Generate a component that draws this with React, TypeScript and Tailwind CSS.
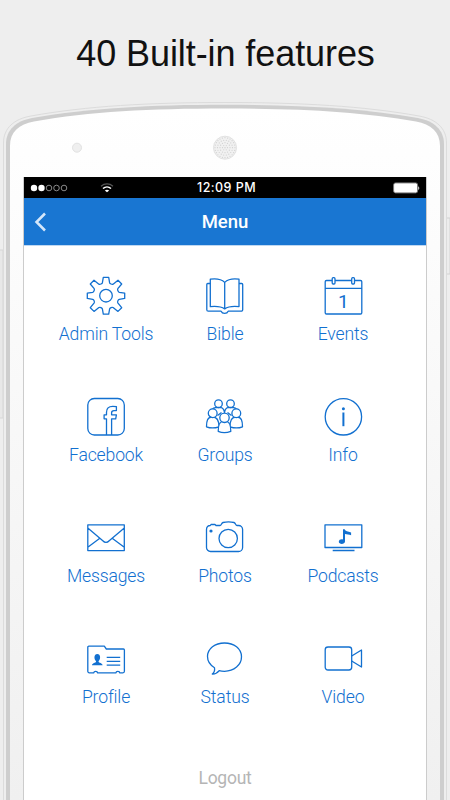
import type { ReactNode } from "react";

const Gear = () => (
  <>
    <path d="M17.300 1.300h5.400l.9 5.400c.3 1 2.400 2 3.500 1.500L32 4.300 35.700 8l-3.900 4.700c-.6 1.200.4 3.300 1.500 3.600l5.400.8v5.300l-5.400.9c-1.100.3-2.100 2.300-1.500 3.500l3.900 4.900-3.700 3.700-4.900-3.900c-1.200-.6-3.200.4-3.500 1.500l-.9 5.200h-5.400l-.9-5.200c-.3-1.100-2.300-2.100-3.500-1.500L8 35.400l-3.700-3.700 3.900-4.900c.6-1.200-.4-3.200-1.500-3.500l-5.400-.9v-5.300l5.400-.8c1.100-.3 2.100-2.400 1.500-3.600L4.300 8 8 4.300l4.900 3.900c1.200.5 3.200-.5 3.500-1.500z" />
    <circle cx="20" cy="19.700" r="6.300" />
  </>
);

const Book = () => (
  <>
    <path d="M5.300 3.200c5-.7 11-.1 14.400 3.200 3.400-3.300 9.400-3.900 14.300-3.200v27.400c-5-.5-11-.1-14.300 2.300-3.400-2.400-9.400-2.800-14.400-2.300zM19.700 6.400v26.500" />
    <path d="M5.300 7.500H2.800a1 1 0 0 0-1 1v25.200a1.500 1.500 0 0 0 1.500 1.500h12.800c1.200 2.900 5.900 2.900 7.100 0h13a1.500 1.500 0 0 0 1.500-1.500V8.500a1 1 0 0 0-1-1H34" />
  </>
);

const Calendar = () => (
  <>
    <path d="M9.200 4.500H3.500a1.300 1.300 0 0 0-1.300 1.300v30.900A1.300 1.300 0 0 0 3.500 38h34a1.300 1.300 0 0 0 1.300-1.300V5.800a1.300 1.300 0 0 0-1.300-1.300h-6M12 4.500h16.700M2.200 12.300h36.600" />
    <rect x="9.200" y="1.700" width="2.800" height="6.300" rx="1" />
    <rect x="28.700" y="1.700" width="2.800" height="6.300" rx="1" />
    <text x="20.300" y="31.500" textAnchor="middle" fontSize="19" fill="currentColor" stroke="none">
      1
    </text>
  </>
);

const Facebook = () => (
  <>
    <rect x="1.800" y="1.500" width="36.500" height="36.500" rx="6.500" />
    <path d="M20.500 38V21.800h-2.400v-4h2.400v-2.600c0-4 2.300-5.900 6.200-5.900 1.500 0 2.700.1 3.700.3v4H28c-1.900 0-2.400.8-2.400 2.200v2h4.800l-.7 4h-4.100V38" />
  </>
);

const Groups = () => (
  <>
    <circle cx="13.500" cy="6.700" r="3.800" />
    <circle cx="25.500" cy="6.700" r="3.800" />
    <path d="M7 12.500c1-1.400 2.600-2 4.300-2.200 1.500.5 3 .5 4.400 0 2 .5 3.500 2.500 3.800 5.200.3-2.700 1.800-4.700 3.800-5.200 1.400.5 2.900.5 4.400 0 1.700.2 3.300.8 4.300 2.200M12.500 18.500l4-3M26.500 18.500l-4-3" />
    <g fill="white">
      <path d="M1.500 29.800c0-5.800.8-9.800 6-9.800s6.500 4 6.500 9.800c-4 1.400-9 1.400-12.500 0zM25 29.800c0-5.800 1.300-9.800 6.500-9.800s6 4 6 9.800c-3.500 1.400-8.500 1.400-12.500 0z" />
      <circle cx="7.700" cy="16.200" r="4.400" />
      <circle cx="31.300" cy="16.200" r="4.400" />
      <path d="M13.200 34.300c0-6.200 1-10.300 6.300-10.300s6.300 4.100 6.300 10.300c-4 1.500-9 1.500-12.600 0z" />
      <circle cx="19.500" cy="20.800" r="4.700" />
    </g>
  </>
);

const Info = () => (
  <>
    <circle cx="20.400" cy="19.800" r="18.200" />
    <path d="M20.400 15.500v13.700" strokeWidth="2" />
    <circle cx="20.400" cy="11.700" r="1.500" fill="currentColor" stroke="none" />
  </>
);

const Envelope = () => (
  <path d="M1.800 6.900h36.500v25.700H1.800zM1.800 10l15 12.700c2 2.200 4.400 2.200 6.400 0L38.300 10M13.500 20.500 1.800 29.300M26.500 20.500l11.800 8.800" />
);

const Camera = () => (
  <>
    <path d="M5.300 7.500 6 6.500h4l1 1h4c1.500 0 1.200-2.500 3-3 3.500-.7 7.500-.7 11 0 1.800.5 1.500 3 3 3h1.600a4 4 0 0 1 4 4v18a4 4 0 0 1-4 4H5.500a4 4 0 0 1-4-4v-18c0-2.500 1.600-4 3.800-4z" />
    <circle cx="23.200" cy="20.500" r="9.200" />
    <circle cx="6" cy="13" r="1.600" fill="currentColor" stroke="none" />
  </>
);

const Podcast = () => (
  <>
    <path d="M2 6.800h36.800v22.700H2zM9.700 32.500h21.800" />
    <path d="M20 11.200h1.600c.7 2 3.200 2 6.500 3.200v2.800c-2-.8-4.200-.9-6.100-1.300v7.700c0 3-6.200 3.200-6.200.2 0-2 2.200-2.800 4.200-2.300z" fill="currentColor" stroke="none" />
  </>
);

const Profile = () => (
  <>
    <path d="M2.800 7.200h15.500l2 2.800h17.100a1 1 0 0 1 1 1v21.300a1.500 1.500 0 0 1-1.500 1.500h-3.200c0-2-3.700-2-3.700 0H11.500c0-2-3.700-2-3.700 0H3.300a1.500 1.500 0 0 1-1.500-1.500V8.200a1 1 0 0 1 1-1z" />
    <path d="M20.700 18.300h13.500M20.700 22.300h13.500M20.700 26.200h13.500" />
    <path d="M6 26.200c0-2.400 3.900-2 4.100-4-2.400-2.200-2.200-7.300 1.200-7.300s3.600 5.100 1.200 7.300c.2 2 4.100 1.600 4.100 4z" fill="currentColor" stroke="none" />
  </>
);

const Bubble = () => (
  <path d="M9.500 28.800C5.200 26.200 2.500 22.200 2.500 17.600 2.500 9.700 10 4 19.500 4s17 5.700 17 13.800-7.500 14.500-17 14.500c-2 0-3.700-.2-5.300-.7-1.900 2.300-4 3.700-6.900 3.500 1.800-1.500 2.700-3.400 2.200-6.300z" />
);

const VideoCam = () => (
  <>
    <rect x="2.200" y="8" width="26.500" height="23" rx="2.800" />
    <path d="m28.700 17 9.800-6v17l-9.800-6" />
  </>
);

const items: { label: string; icon: ReactNode }[] = [
  { label: "Admin Tools", icon: <Gear /> },
  { label: "Bible", icon: <Book /> },
  { label: "Events", icon: <Calendar /> },
  { label: "Facebook", icon: <Facebook /> },
  { label: "Groups", icon: <Groups /> },
  { label: "Info", icon: <Info /> },
  { label: "Messages", icon: <Envelope /> },
  { label: "Photos", icon: <Camera /> },
  { label: "Podcasts", icon: <Podcast /> },
  { label: "Profile", icon: <Profile /> },
  { label: "Status", icon: <Bubble /> },
  { label: "Video", icon: <VideoCam /> },
];

const rings = [
  { r: 2.5, n: 6 },
  { r: 5, n: 12 },
  { r: 7.5, n: 18 },
  { r: 10, n: 24 },
];

const PhoneBody = () => (
  <svg className="absolute inset-0" width="450" height="800" viewBox="0 0 450 800" fill="none">
    <defs>
      <linearGradient id="face" x1="0" y1="108" x2="0" y2="800" gradientUnits="userSpaceOnUse">
        <stop offset="0" stopColor="#ffffff" />
        <stop offset=".2" stopColor="#fcfcfc" />
        <stop offset="1" stopColor="#f0f0f0" />
      </linearGradient>
    </defs>
    <path d="M0 250H3V418H0" fill="#e8e8e8" stroke="#d6d6d6" />
    <path d="M446.500 218V274H450V218z" fill="#ededed" stroke="#d2d2d2" />
    <path d="M3.500 802V143C3.500 128 14 119 31 116 86 106 150 102.500 225 102.500S364 106 419 116C436 119 446.500 128 446.500 143V802" fill="#eeeeee" stroke="#dcdcdc" />
    <path d="M6 802V144C6 130 16 121 32 118 90 108 150 104.700 225 104.700S360 108 418 118C434 121 444 130 444 144V802" fill="#cecece" />
    <path d="M10 802V146C10 132 19 124 34 121.500 90 111.500 150 108.500 225 108.500S360 111.500 416 121.500C431 124 440 132 440 146V802" fill="url(#face)" />
    <circle cx="77" cy="147.700" r="4.500" fill="#efefef" stroke="#e2e2e2" />
    <circle cx="225" cy="147.700" r="11.500" fill="#f1f1f1" stroke="#e2e2e2" />
    <circle cx="225" cy="147.700" r=".7" fill="#cfcfcf" />
    {rings.map(({ r, n }) =>
      Array.from({ length: n }, (_, i) => (
        <circle
          key={`${r}-${i}`}
          cx={225 + r * Math.cos((i * 2 * Math.PI) / n)}
          cy={147.7 + r * Math.sin((i * 2 * Math.PI) / n)}
          r=".6"
          fill="#d0d0d0"
        />
      ))
    )}
  </svg>
);

const StatusBar = () => (
  <div className="grid h-[21px] grid-cols-3 items-center bg-black px-[6px] text-white">
    <div className="flex items-center gap-[32px]">
      <svg width="38" height="8" viewBox="0 0 38 8" fill="none" stroke="#aaa" strokeWidth=".8">
        <circle cx="4" cy="4" r="3.200" fill="white" stroke="none" />
        <circle cx="11.500" cy="4" r="3.200" fill="white" stroke="none" />
        <circle cx="19" cy="4" r="2.800" />
        <circle cx="26.500" cy="4" r="2.800" />
        <circle cx="34" cy="4" r="2.800" />
      </svg>
      <svg width="14" height="10" viewBox="0 0 14 10" fill="none" strokeWidth="1.600">
        <path d="M1 3.200c3.500-3 8.500-3 12 0" stroke="#555" strokeWidth="1.200" />
        <path d="M3 5.500c2.300-2 5.700-2 8 0" stroke="white" />
        <path d="M7 9.300 4.800 7.400c1.300-1 3.100-1 4.400 0z" fill="white" />
      </svg>
    </div>
    <span className="pl-[3px] pt-[2px] text-center font-[Inter,sans-serif] text-[12.500px] font-medium leading-none tracking-[0.450px]">12:09 PM</span>
    <svg className="justify-self-end" width="28" height="12" viewBox="0 0 28 12">
      <rect x="1.600" y=".9" width="24" height="10" rx="2" fill="white" stroke="#777" />
      <path d="M26.300 4.200c1.300.5 1.300 3.300 0 3.800z" fill="white" />
    </svg>
  </div>
);

const App = () => {
  return (
    <div className="relative h-[800px] w-[450px] overflow-hidden bg-[#eeeeee] font-[Roboto,sans-serif]">
      <PhoneBody />
      <div className="relative flex h-full flex-col">
        <h1 className="h-[177px] pl-[1px] pt-[32px] text-center font-['Liberation_Sans',sans-serif] text-[36px] leading-[44px] tracking-[-0.080px] text-[#111]">
          40 Built-in features
        </h1>
        <main className="mx-[23px] flex-1 border-x border-[#cccccc] bg-white">
          <StatusBar />
          <header className="grid h-[47px] grid-cols-3 items-center bg-[#1976d2] text-white">
            <svg className="ml-[10px]" width="14" height="20" viewBox="0 0 14 20" fill="none" stroke="#d5e7fa" strokeWidth="2.500">
              <path d="M11 1.500 2.500 10 11 18.500" />
            </svg>
            <h2 className="pt-px text-center text-[18.500px] font-medium leading-none">Menu</h2>
          </header>
          <div className="grid auto-rows-[121px] grid-cols-[118px_120px_116px] border-t border-[#bfd8f2] pl-[23px] pt-[30px] text-[#1270d0]">
            {items.map(({ label, icon }) => (
              <div key={label} className="flex flex-col items-center">
                <svg width="40" height="40" viewBox="0 0 40 40" fill="none" stroke="currentColor" strokeWidth="1.300" strokeLinejoin="round">
                  {icon}
                </svg>
                <span className="mt-[6px] text-[17.600px] font-light leading-6 tracking-[-0.150px]">{label}</span>
              </div>
            ))}
          </div>
          <p className="pt-[6px] text-center text-[17.500px] leading-6 tracking-[-0.250px] text-[#b5b5b5]">Logout</p>
        </main>
      </div>
    </div>
  );
};

export default App;
